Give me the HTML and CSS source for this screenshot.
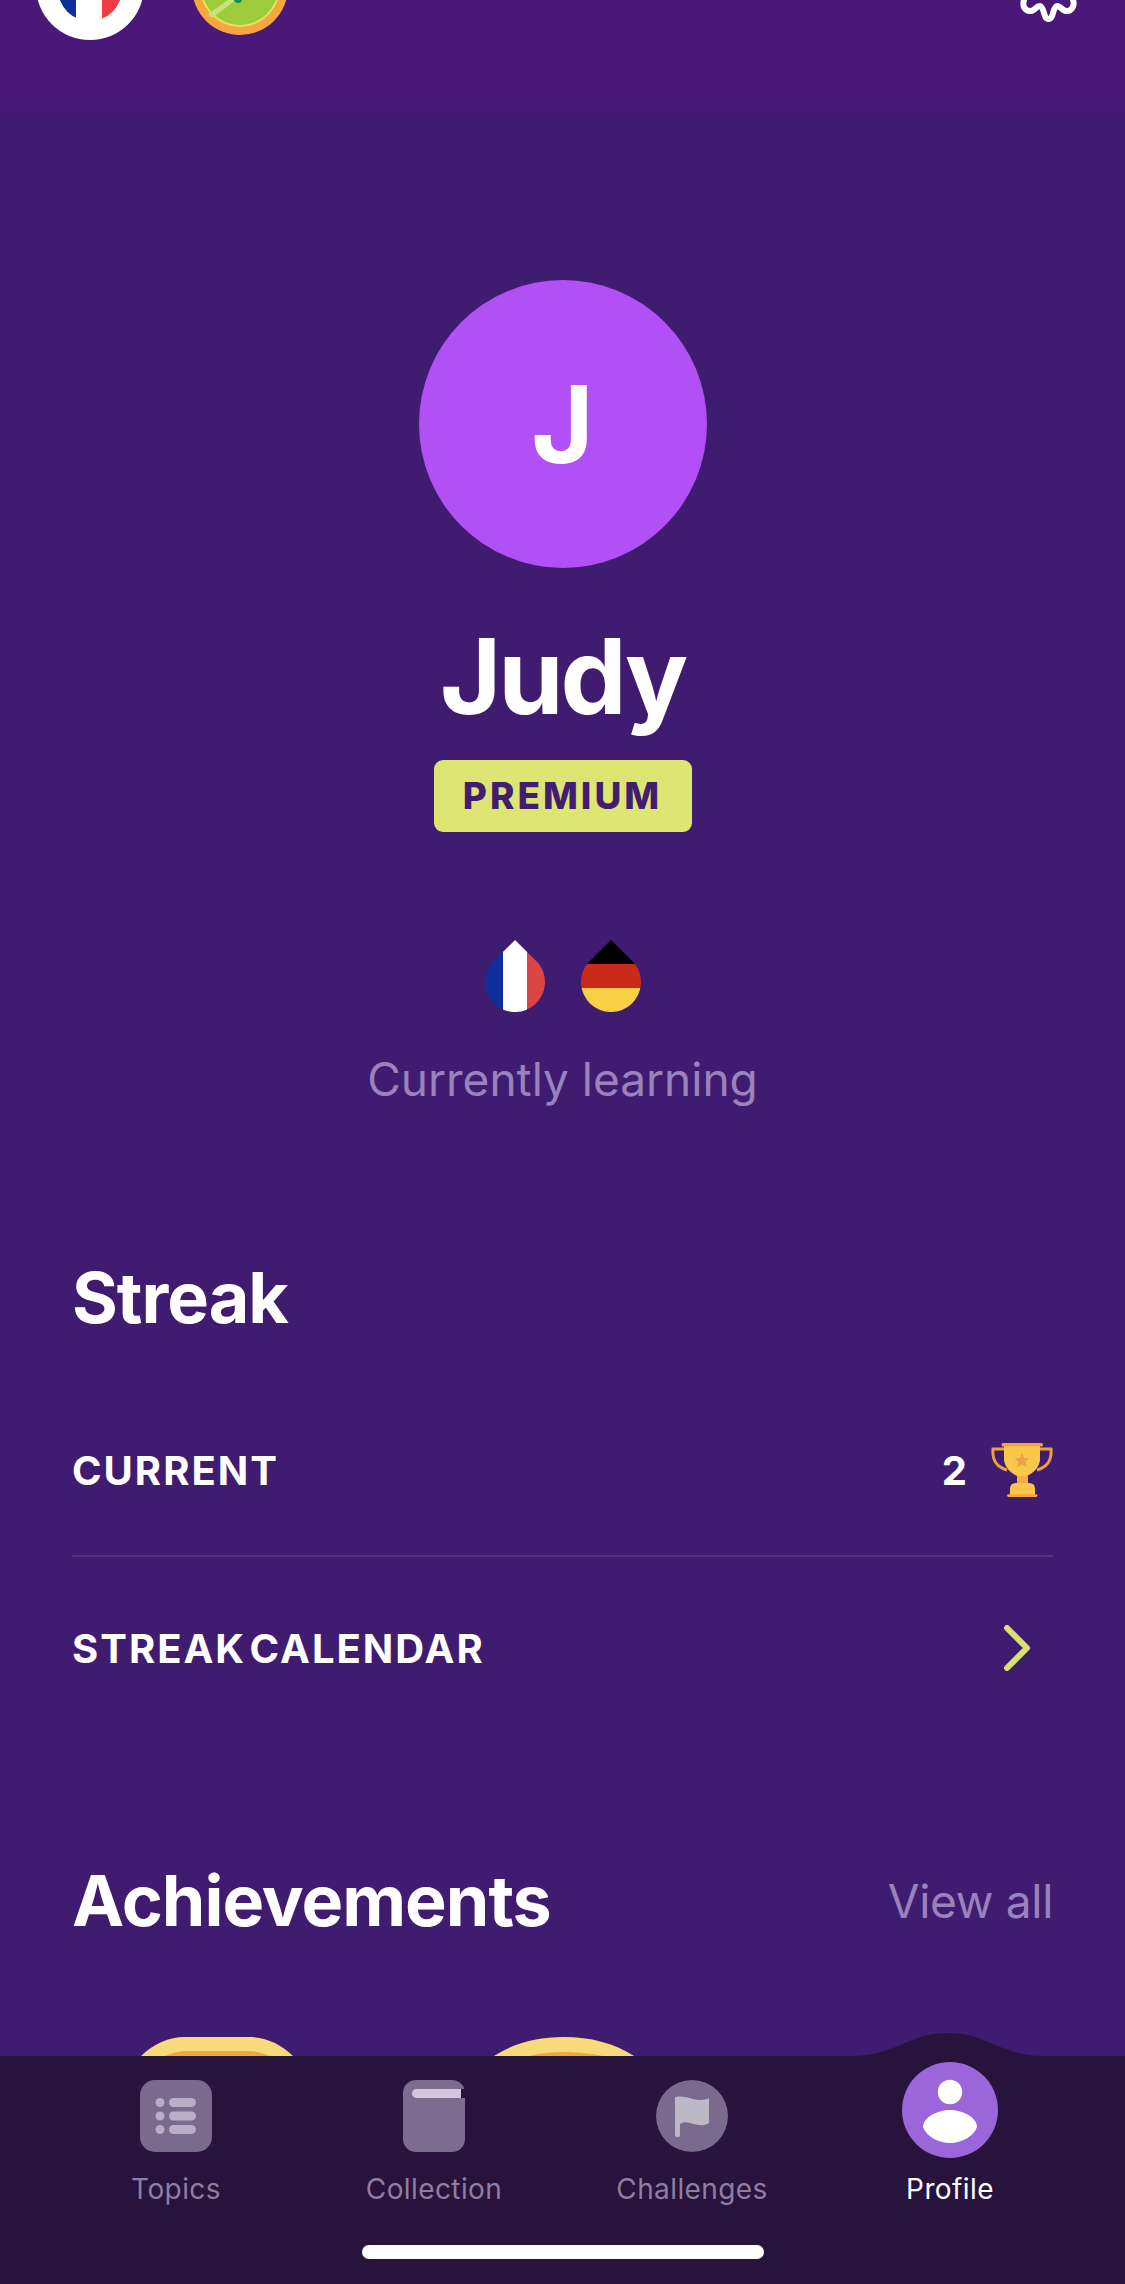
FILE: index.html
```html
<!DOCTYPE html>
<html lang="en">
<head>
  <meta charset="UTF-8" />
  <title>Profile</title>
  <link rel="stylesheet" href="styles.css">
</head>
<body>
  <div class="page">
    <div class="scroll">
      <header class="topbar">
        <svg class="top-flag" width="108" height="40" viewBox="0 0 108 40">
          <defs>
            <clipPath id="topFlagClip"><circle cx="54" cy="-11" r="32"/></clipPath>
          </defs>
          <circle cx="54" cy="-14" r="54" fill="#fff"/>
          <g clip-path="url(#topFlagClip)">
            <rect x="18" y="-46" width="22" height="70" fill="#0f2f9c"/>
            <rect x="40" y="-46" width="26" height="70" fill="#fff"/>
            <rect x="66" y="-46" width="24" height="70" fill="#ee3e42"/>
          </g>
        </svg>
        <svg class="top-medal" width="96" height="36" viewBox="0 0 96 36">
          <circle cx="48" cy="-13" r="48" fill="#f5a63e"/>
          <circle cx="48" cy="-13" r="40" fill="#e9e05c"/>
          <circle cx="48" cy="-13" r="38" fill="#9ccc3c"/>
          <polygon points="16,14 36,0 44,0 20,18" fill="#c9e27c"/>
          <circle cx="46" cy="-1" r="4" fill="#14905a"/>
        </svg>
        <svg class="top-gear" width="60" height="24" viewBox="0 0 60 24">
          <path d="M4 0 C2 6 5 11 10 11 C15 11 17 5 20 6 C25 8 23 19 28.500 19 C34 19 32 8 37 6 C40 5 42 11 47 11 C52 11 55 5 53 0" fill="none" stroke="#fff" stroke-width="6" stroke-linecap="round"/>
        </svg>
      </header>

      <section class="profile">
        <div class="avatar">J</div>
        <h1 class="name">Judy</h1>
        <div class="badge">PREMIUM</div>
        <div class="flags">
          <svg width="60" height="72" viewBox="0 0 60 72">
            <defs>
              <clipPath id="dropFr"><path d="M30 0 L53.2 23 A30 30 0 1 1 6.8 23 Z"/></clipPath>
            </defs>
            <g clip-path="url(#dropFr)">
              <rect x="0" width="18" height="72" fill="#0f2f9c"/>
              <rect x="18" width="24" height="72" fill="#fff"/>
              <rect x="42" width="18" height="72" fill="#dd4444"/>
            </g>
          </svg>
          <svg width="60" height="72" viewBox="0 0 60 72">
            <defs>
              <clipPath id="dropDe"><path d="M30 0 L53.2 23 A30 30 0 1 1 6.8 23 Z"/></clipPath>
            </defs>
            <g clip-path="url(#dropDe)">
              <rect y="0" width="60" height="24" fill="#000"/>
              <rect y="24" width="60" height="24" fill="#c92a1a"/>
              <rect y="48" width="60" height="24" fill="#f7d048"/>
            </g>
          </svg>
        </div>
        <p class="learning">Currently learning</p>
      </section>

      <section class="streak">
        <h2 class="section-title">Streak</h2>
        <div class="row row-line">
          <span class="row-label">CURRENT</span>
          <span class="row-value">
            <span class="row-num">2</span>
            <svg width="62" height="54" viewBox="0 0 62 54">
              <path d="M13 6 H2 C1 18 6 24 16 27 M49 6 H60 C61 18 56 24 46 27" fill="none" stroke="#eca040" stroke-width="3"/>
              <path d="M13 3 H49 V16 C49 24 42 30 36 33 H26 C20 30 13 24 13 16 Z" fill="#f9c84a"/>
              <rect x="10.5" y="0" width="41.5" height="3.6" rx="1.5" fill="#f5a53b"/>
              <rect x="26" y="33" width="11" height="7" fill="#f3ae3f"/>
              <path d="M19 52 V46 Q19 40 25 40 H38 Q44 40 44 46 V52 Z" fill="#f9c84a"/>
              <rect x="16" y="51.2" width="30.5" height="2.8" rx="1.4" fill="#f5a53b"/>
              <polygon points="31,10 33.2,15 38.5,15.4 34.5,18.8 35.8,24 31,21.2 26.2,24 27.5,18.8 23.5,15.4 28.8,15" fill="#f0a040"/>
            </svg>
          </span>
        </div>
        <div class="row row-link">
          <span class="row-label">STREAK CALENDAR</span>
          <svg class="chevron" width="28" height="46" viewBox="0 0 28 46">
            <path d="M4 3 L24 23 L4 43" fill="none" stroke="#d9e36b" stroke-width="6" stroke-linecap="round" stroke-linejoin="round"/>
          </svg>
        </div>
      </section>

      <section class="achievements">
        <div class="section-head">
          <h2 class="section-title">Achievements</h2>
          <a class="view-all">View all</a>
        </div>
        <div class="medals">
          <svg width="152" height="40" viewBox="0 0 152 40">
            <path d="M0 19 C12 7 28 0 44 0 H108 C124 0 140 7 152 19 V40 H0 Z" fill="#f7db7a"/>
            <path d="M24 19 C30 16 38 14 46 14 H106 C114 14 122 16 128 19 V40 H24 Z" fill="#eaa847"/>
          </svg>
          <svg width="140" height="40" viewBox="0 0 140 40">
            <path d="M0 19 C20 6 44 0 70 0 C96 0 120 6 140 19 V40 H0 Z" fill="#f7db7a"/>
            <path d="M36 19 C46 16 58 15 70 15 C82 15 94 16 109 19 V40 H36 Z" fill="#eaa847"/>
          </svg>
        </div>
      </section>
    </div>

    <nav class="tabbar">
      <svg class="tab-bump" width="192" height="24" viewBox="0 0 192 24">
        <path d="M0 24 C44 24 58 1 97 1 C136 1 150 24 192 24 Z" fill="#27133b"/>
      </svg>
      <div class="tabs">
        <div class="tab">
          <svg class="tab-icon" width="72" height="72" viewBox="0 0 72 72">
            <rect width="72" height="72" rx="15" fill="#7a6a8e"/>
            <circle cx="20" cy="22.500" r="4.500" fill="#b9aec8"/>
            <circle cx="20" cy="36" r="4.500" fill="#b9aec8"/>
            <circle cx="20" cy="49.500" r="4.500" fill="#b9aec8"/>
            <rect x="29" y="18" width="27" height="9" rx="4.500" fill="#b9aec8"/>
            <rect x="29" y="31.500" width="27" height="9" rx="4.500" fill="#b9aec8"/>
            <rect x="29" y="45" width="27" height="9" rx="4.500" fill="#b9aec8"/>
          </svg>
          <span class="tab-label">Topics</span>
        </div>
        <div class="tab">
          <svg class="tab-icon" width="62" height="72" viewBox="0 0 62 72">
            <rect width="62" height="72" rx="13" fill="#7c6c8f"/>
            <rect x="58" y="9" width="4" height="9" fill="#27133b"/>
            <path d="M13.500 9 H58 V18 H13.500 A4.500 4.500 0 0 1 13.500 9 Z" fill="#d2c7dc"/>
          </svg>
          <span class="tab-label">Collection</span>
        </div>
        <div class="tab">
          <svg class="tab-icon" width="72" height="72" viewBox="0 0 72 72">
            <circle cx="36" cy="36" r="36" fill="#7a6a8e"/>
            <path d="M19 17 C30 14 42 24 53 18 V43 C42 50 32 38 24 44 H19 Z" fill="#bdb8c6"/>
            <rect x="19" y="17" width="5" height="40" rx="2.500" fill="#bdb8c6"/>
          </svg>
          <span class="tab-label">Challenges</span>
        </div>
        <div class="tab tab-active">
          <svg class="tab-icon" width="96" height="96" viewBox="0 0 96 96">
            <circle cx="48" cy="48" r="48" fill="#9a66da"/>
            <circle cx="48" cy="30" r="12.200" fill="#fff"/>
            <path d="M48 48 C60 48 75 55 75 65 C72 74 60 81 48 81 C36 81 24 74 21 65 C21 55 36 48 48 48 Z" fill="#fff"/>
          </svg>
          <span class="tab-label">Profile</span>
        </div>
      </div>
      <div class="home-indicator"></div>
    </nav>
  </div>
</body>
</html>
```

FILE: styles.css
```css
* {
  box-sizing: border-box;
}

html, body {
  margin: 0;
  padding: 0;
}

body {
  font-family: Inter, "Noto Sans", sans-serif;
  background: #401c70;
  color: #fff;
}

.page {
  width: 1125px;
  height: 2284px;
  display: flex;
  flex-direction: column;
  overflow: hidden;
}

.scroll {
  flex: 1;
  min-height: 0;
  overflow: hidden;
  background: #401c70;
}

/* top bar, scrolled most of the way out */
.topbar {
  height: 122px;
  background: linear-gradient(#4a1878 0, #4a1878 104px, #401c70 122px);
  display: flex;
  align-items: flex-start;
  padding: 0 45px 0 36px;
}

.top-medal {
  margin-left: 48px;
}

.top-gear {
  margin-left: auto;
}

.profile {
  display: flex;
  flex-direction: column;
  align-items: center;
}

.avatar {
  width: 288px;
  height: 288px;
  margin-top: 158px;
  border-radius: 50%;
  background: #b050f5;
  display: flex;
  align-items: center;
  justify-content: center;
  font-size: 107px;
  font-weight: 700;
  line-height: 1;
}

.name {
  margin: 43px 0 0;
  font-size: 105px;
  font-weight: 700;
  letter-spacing: -3px;
  line-height: 130px;
}

.badge {
  margin-top: 19px;
  width: 258px;
  height: 72px;
  border-radius: 9px;
  background: #dde672;
  color: #421d70;
  font-size: 37px;
  font-weight: 800;
  letter-spacing: 3px;
  line-height: 72px;
  text-align: center;
}

.flags {
  display: flex;
  gap: 36px;
  margin-top: 108px;
}

.learning {
  margin: 39px 0 0;
  color: #9a82bc;
  font-size: 46px;
  line-height: 56px;
}

.streak {
  padding: 0 72px;
  margin-top: 147px;
}

.section-title {
  margin: 0;
  font-size: 70px;
  font-weight: 700;
  letter-spacing: -1px;
  line-height: 88px;
}

.row {
  display: flex;
  align-items: center;
  justify-content: space-between;
}

.row-line {
  height: 172px;
  margin-top: 43px;
  border-bottom: 2px solid #553480;
}

.row-link {
  height: 182px;
  padding-right: 22px;
}

.row-label {
  font-size: 40px;
  font-weight: 700;
  letter-spacing: 2px;
  word-spacing: -8px;
}

.row-value {
  display: flex;
  align-items: center;
  gap: 24px;
}

.row-num {
  font-size: 40px;
  font-weight: 700;
}

.achievements {
  padding: 0 72px;
  margin-top: 118px;
}

.section-head {
  display: flex;
  align-items: center;
  justify-content: space-between;
}

.view-all {
  color: #9a82bc;
  font-size: 46px;
  letter-spacing: -0.3px;
}

.medals {
  display: flex;
  gap: 201px;
  margin-top: 92px;
  padding-left: 69px;
}

/* bottom navigation */
.tabbar {
  position: relative;
  flex: none;
  height: 228px;
  background: #27133b;
}

.tab-bump {
  position: absolute;
  left: 851px;
  bottom: 100%;
}

.tabs {
  display: grid;
  grid-template-columns: repeat(4, 258px);
  padding: 24px 47px 0;
}

.tab {
  display: flex;
  flex-direction: column;
  align-items: center;
}

.tab-icon {
  display: block;
}

.tab-label {
  margin-top: 19px;
  color: #8e7fa0;
  font-size: 28px;
  letter-spacing: 0.4px;
  line-height: 36px;
}

.tab-active .tab-icon {
  margin-top: -18px;
  margin-bottom: -6px;
}

.tab-active .tab-label {
  color: #fff;
}

.home-indicator {
  width: 402px;
  height: 14px;
  margin: 38px auto 0;
  border-radius: 7px;
  background: #fff;
}
```
